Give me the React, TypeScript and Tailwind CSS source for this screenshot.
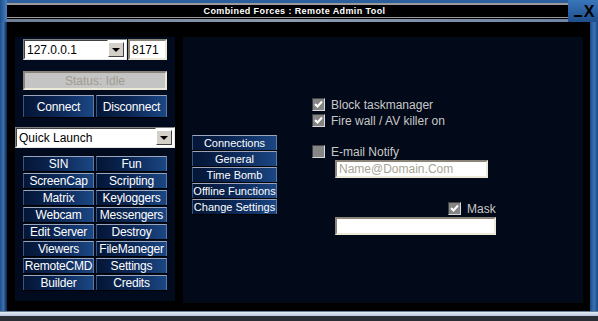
import type { ReactNode } from "react";

const font = "font-['Liberation_Sans',Arial,sans-serif]";

function BlueButton({ children, className = "" }: { children: ReactNode; className?: string }) {
  return (
    <div
      className={`flex items-center justify-center whitespace-nowrap border-t border-l border-r border-t-[#9aa6bc] border-l-[#3a5680] border-r-[#5b7aa8] bg-linear-to-r from-[#051636] via-[#0c2857] to-[#1b4784] leading-none text-white shadow-[0_1px_0_#000] ${className}`}
    >
      {children}
    </div>
  );
}

function Combo({ value, className = "" }: { value: string; className?: string }) {
  return (
    <div
      className={`flex items-stretch border border-t-[#808080] border-l-[#808080] border-b-[#e8e8e8] border-r-[#e8e8e8] bg-white ${className}`}
    >
      <div className="flex flex-1 items-center border border-t-[#404040] border-l-[#404040] border-b-white border-r-white pl-[2px] text-[12px] text-black">
        {value}
      </div>
      <div className="my-[2px] mr-[2px] flex w-[16px] items-center justify-center border border-t-white border-l-white border-b-[#404040] border-r-[#404040] bg-[#d4d0c8]">
        <span className="block h-0 w-0 border-x-[4px] border-t-[4px] border-x-transparent border-t-black" />
      </div>
    </div>
  );
}

function Check({ checked }: { checked: boolean }) {
  return (
    <span className="flex h-[13px] w-[13px] items-center justify-center border border-t-[#404040] border-l-[#404040] border-b-[#d8d8d8] border-r-[#d8d8d8] bg-[#858585]">
      {checked && (
        <svg width="9" height="9" viewBox="0 0 9 9">
          <path d="M1 4 L3.5 6.5 L8 1.5" stroke="#fff" strokeWidth="2" fill="none" />
        </svg>
      )}
    </span>
  );
}

function Field({ className = "", placeholder }: { className?: string; placeholder?: string }) {
  return (
    <div
      className={`flex items-center border-2 border-t-[#8a8578] border-l-[#8a8578] border-b-[#ece9d8] border-r-[#ece9d8] bg-white pl-[2px] text-[12px] text-[#a8a494] ${className}`}
    >
      {placeholder}
    </div>
  );
}

const launch = [
  ["SIN", "Fun"],
  ["ScreenCap", "Scripting"],
  ["Matrix", "Keyloggers"],
  ["Webcam", "Messengers"],
  ["Edit Server", "Destroy"],
  ["Viewers", "FileManeger"],
  ["RemoteCMD", "Settings"],
  ["Builder", "Credits"],
];

const tabs = ["Connections", "General", "Time Bomb", "Offline Functions", "Change Settings"];

export default function App() {
  return (
    <div className={`relative flex h-[321px] w-[598px] flex-col overflow-hidden bg-black ${font}`}>
      {/* title bar */}
      <div className="flex h-[22px] shrink-0">
        <div className="w-[7px] bg-linear-to-r from-[#1d4f8c] to-[#4a80c0]" />
        <div className="flex flex-1 flex-col">
          <div className="h-[3px] bg-[#2d5f9c]" />
          <div className="h-[2px] bg-[#9a9a9a]" />
          <div className="flex h-[12px] items-center justify-center whitespace-nowrap bg-black pl-[14px] text-[9px] font-bold leading-none tracking-[0.4px] text-white">
            Combined Forces : Remote Admin Tool
          </div>
          <div className="h-[1px] bg-[#9a9a9a]" />
          <div className="h-[1px] bg-black" />
          <div className="h-[3px] bg-linear-to-r from-[#6e7f96] via-[#8d9aac] to-[#6f86a6]" />
        </div>
        <div className="flex w-[30px] items-end justify-center gap-[2px] bg-linear-to-b from-[#3a76bb] to-[#1f4f8c] pb-[4px] pl-[2px]">
          <span className="mb-[1px] block h-[2px] w-[8px] bg-black" />
          <span className="text-[16px] font-bold leading-[12px] text-black">X</span>
        </div>
      </div>

      {/* body */}
      <div className="flex flex-1">
        <div className="w-[7px] bg-linear-to-r from-[#1d4f8c] via-[#3a70b0] to-[#0c2345]" />
        <div className="flex flex-1 gap-[8px] pl-[8px] pt-[15px]">
          {/* left panel */}
          <div className="flex h-[264px] w-[160px] flex-col bg-[#020a1d] pt-[2px]">
            <div className="flex gap-[1px] px-[8px]">
              <Combo value="127.0.0.1" className="h-[21px] w-[104px]" />
              <Field className="h-[21px] w-[39px] !text-black" placeholder="8171" />
            </div>
            <div className="mx-[8px] mt-[11px] flex h-[19px] items-center justify-center border-2 border-t-[#8a8578] border-l-[#8a8578] border-b-[#ece9d8] border-r-[#ece9d8] bg-[#c4c4c4] text-[12px] text-[#a09c90]">
              Status: Idle
            </div>
            <div className="mt-[5px] flex gap-[2px] px-[8px]">
              <BlueButton className="h-[22px] w-[71px] text-[12px] tracking-[-0.2px]">Connect</BlueButton>
              <BlueButton className="h-[22px] w-[71px] text-[12px] tracking-[-0.2px]">Disconnect</BlueButton>
            </div>
            <Combo value="Quick Launch" className="mt-[10px] h-[21px] w-[160px]" />
            <div className="mt-[8px] grid grid-cols-2 gap-x-[2px] gap-y-[2px] px-[8px]">
              {launch.flat().map((t) => (
                <BlueButton key={t} className="h-[15px] text-[12px] tracking-[-0.2px]">
                  {t}
                </BlueButton>
              ))}
            </div>
          </div>

          {/* right panel */}
          <div className="flex h-[266px] w-[400px] bg-[#020918]">
            <div className="flex flex-col gap-[1px] pl-[9px] pt-[98px]">
              {tabs.map((t) => (
                <BlueButton key={t} className="h-[15px] w-[85px] text-[11px]">
                  {t}
                </BlueButton>
              ))}
            </div>
            <div className="flex flex-col pl-[35px] pt-[61px] text-[12px] text-[#c8c8c8]">
              <div className="flex h-[13px] items-center gap-[6px]">
                <Check checked />
                <span>Block taskmanager</span>
              </div>
              <div className="mt-[3px] flex h-[13px] items-center gap-[6px]">
                <Check checked />
                <span>Fire wall / AV killer on</span>
              </div>
              <div className="mt-[18px] flex h-[13px] items-center gap-[6px]">
                <Check checked={false} />
                <span>E-mail Notify</span>
              </div>
              <Field className="ml-[23px] mt-[2px] h-[18px] w-[153px]" placeholder="Name@Domain.Com" />
              <div className="ml-[136px] mt-[24px] flex h-[13px] items-center gap-[6px]">
                <Check checked />
                <span>Mask</span>
              </div>
              <Field className="ml-[23px] mt-[2px] h-[18px] w-[161px]" />
            </div>
          </div>
        </div>
        <div className="w-[8px] bg-linear-to-r from-[#1a4a86] via-[#3a72b4] to-[#1b4a84]" />
      </div>

      {/* bottom edge */}
      <div className="flex h-[10px] shrink-0 flex-col">
        <div className="h-[1px] bg-[#6a7c96]" />
        <div className="h-[4px] bg-linear-to-b from-[#e4ecf6] to-[#b8c6da]" />
        <div className="flex-1 bg-[#2a2d33]" />
      </div>
    </div>
  );
}
